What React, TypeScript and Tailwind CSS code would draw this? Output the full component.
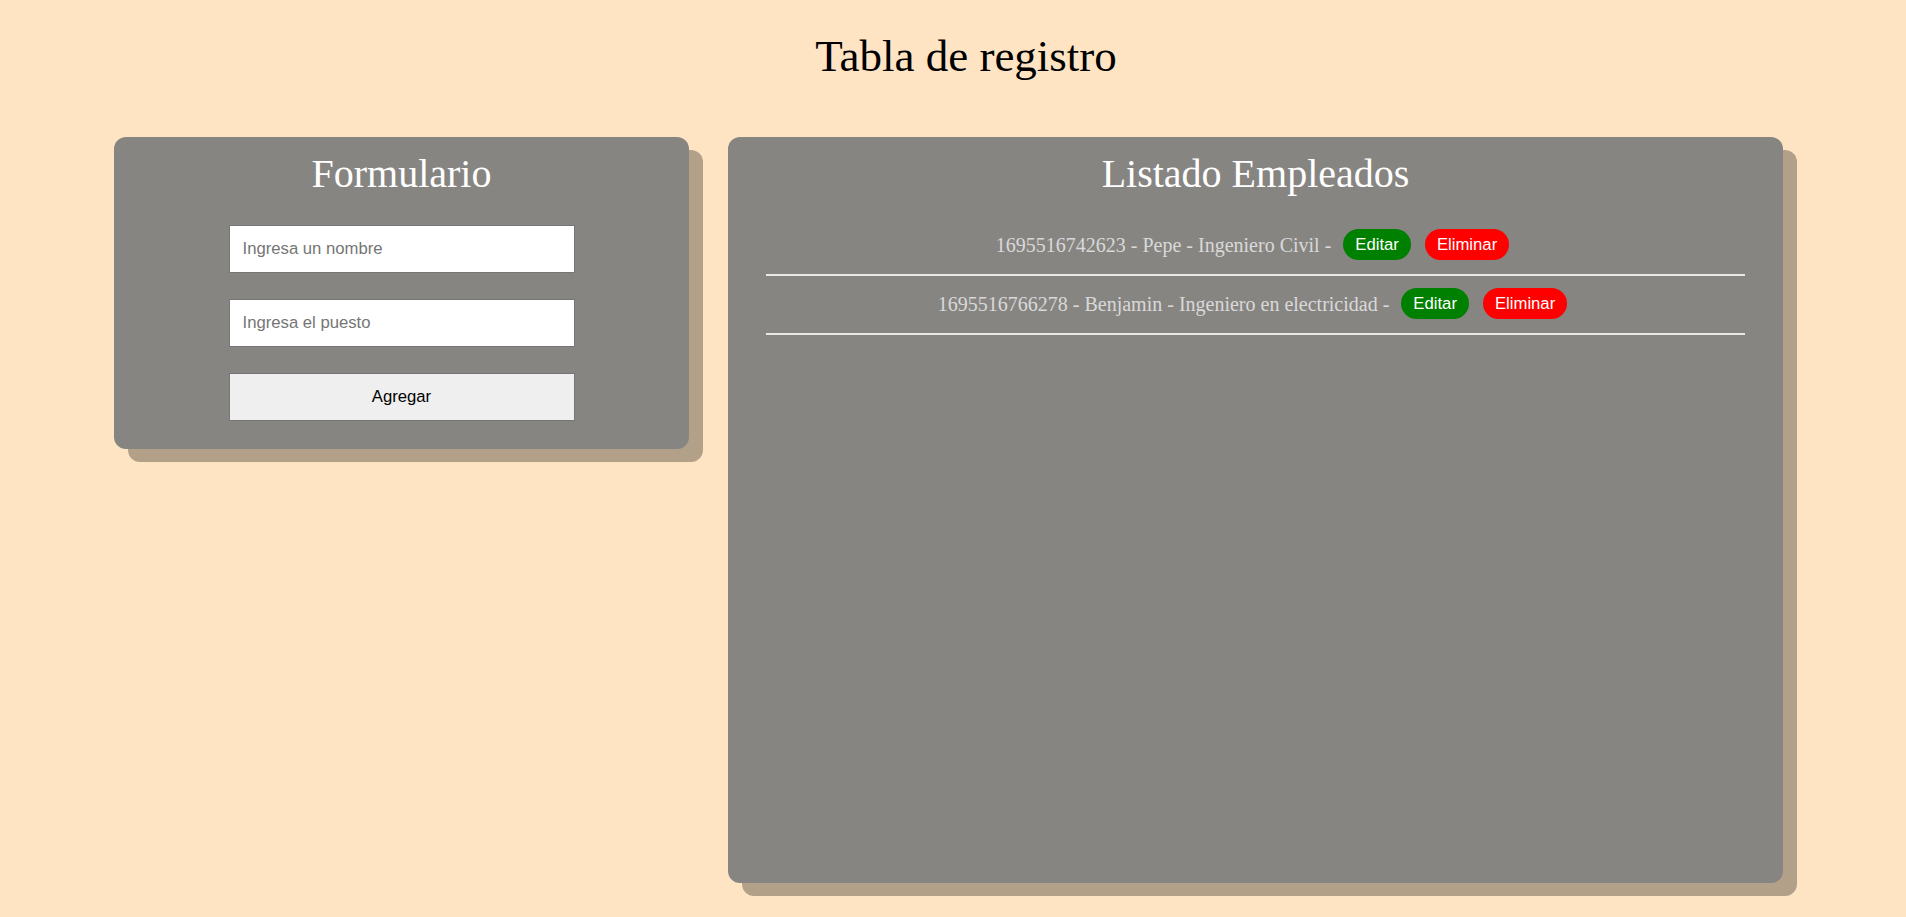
import React, { useState } from 'react';

type Empleado = { id: number; nombre: string; puesto: string };

export default function App() {
  const [empleados] = useState<Empleado[]>([
    { id: 1695516742623, nombre: 'Pepe', puesto: 'Ingeniero Civil' },
    { id: 1695516766278, nombre: 'Benjamin', puesto: 'Ingeniero en electricidad' },
  ]);

  return (
    <div className="min-h-screen bg-[#ffe4c4] font-['Liberation_Serif',serif]">
      <h1 className="pl-[26px] pt-[30px] text-center text-[45px] leading-[52px] text-black">Tabla de registro</h1>

      <div className="mt-[55px] flex items-start gap-[39px] pl-[114px]">
        {/* Formulario */}
        <div className="w-[575px] rounded-[12px] bg-[#878582] px-6 pb-[28px] pt-[14px] shadow-[14px_13px_0_#b3a089]">
          <h2 className="text-center text-[40px] leading-[46px] text-white">Formulario</h2>
          <form className="mx-auto mt-[28px] flex w-[346px] flex-col gap-[26px] font-['Liberation_Sans',sans-serif] text-[16.7px]">
            <input
              type="text"
              placeholder="Ingresa un nombre"
              className="h-[48px] w-full border border-[#767676] bg-white px-[13px] text-black outline-none placeholder:text-[#757575]"
            />
            <input
              type="text"
              placeholder="Ingresa el puesto"
              className="h-[48px] w-full border border-[#767676] bg-white px-[13px] text-black outline-none placeholder:text-[#757575]"
            />
            <button type="button" className="h-[48px] w-full border border-[#767676] bg-[#efefef] text-black">
              Agregar
            </button>
          </form>
        </div>

        {/* Listado */}
        <div className="h-[746px] w-[1055px] rounded-[12px] bg-[#878582] px-[38px] pt-[14px] shadow-[14px_13px_0_#b3a089]">
          <h2 className="text-center text-[40px] leading-[46px] text-white">Listado Empleados</h2>
          <ul className="mt-[20px]">
            {empleados.map((e) => (
              <li
                key={e.id}
                className="flex items-center justify-center border-b-2 border-[#e8e8e8] pb-[14px] pt-[12px]"
              >
                <span className="text-[20px] text-[#d9d9d9]">
                  {e.id} - {e.nombre} - {e.puesto} -
                </span>
                <button className="ml-[12px] h-[31px] rounded-full bg-[#008000] px-[12px] font-['Liberation_Sans',sans-serif] text-[16.7px] text-white">
                  Editar
                </button>
                <button className="ml-[14px] mr-[6px] h-[31px] rounded-full bg-[#ff0000] px-[12px] font-['Liberation_Sans',sans-serif] text-[16.7px] text-white">
                  Eliminar
                </button>
              </li>
            ))}
          </ul>
        </div>
      </div>
    </div>
  );
}
